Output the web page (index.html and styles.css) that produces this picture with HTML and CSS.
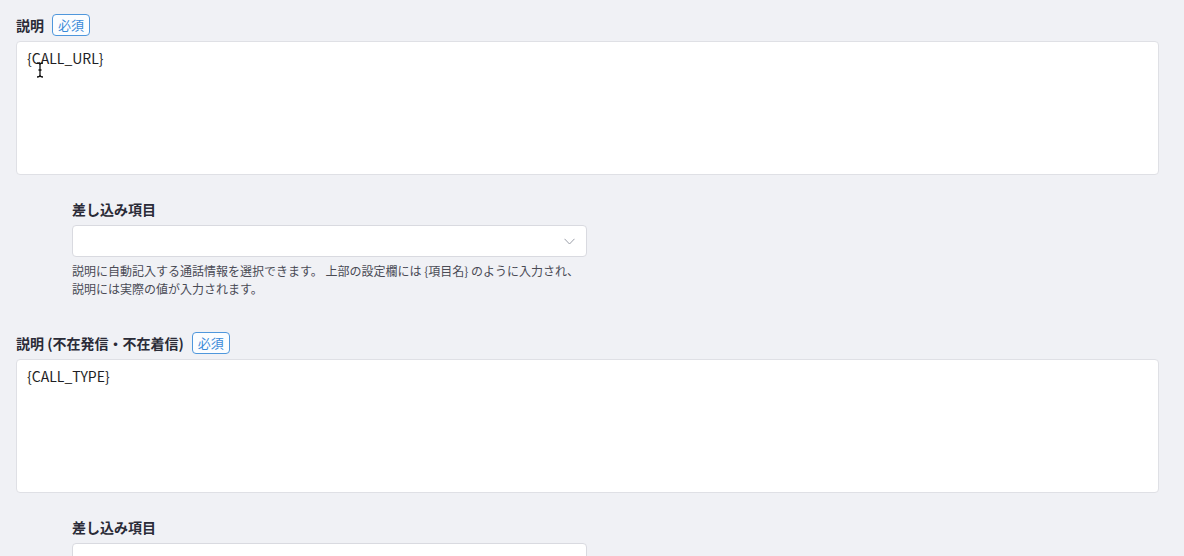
FILE: index.html
```html
<!DOCTYPE html>
<html lang="ja">
<head>
<meta charset="utf-8">
<title>説明</title>
<link rel="stylesheet" href="styles.css">
</head>
<body>
<div class="page">

  <!-- 説明 -->
  <div class="field">
    <div class="label-row">
      <span class="label">説明</span>
      <span class="badge">必須</span>
    </div>
    <div class="textarea-wrap">
      <div class="textarea">{CALL_URL}</div>
      <svg class="ibeam" width="8" height="16" viewBox="0 0 8 16">
        <path d="M1 1 Q4 1 4 3 L4 13 Q4 15 1 15 M7 1 Q4 1 4 3 M4 13 Q4 15 7 15 M2.5 8 L5.5 8" fill="none" stroke="#111" stroke-width="1.3"/>
      </svg>
    </div>
    <div class="sub">
      <div class="sub-label">差し込み項目</div>
      <div class="select">
        <svg class="chevron" width="11" height="7" viewBox="0 0 11 7"><path d="M0.5 0.8 L5.5 6 L10.5 0.8" fill="none" stroke="#9a9ea8" stroke-width="1"/></svg>
      </div>
      <p class="help">説明に自動記入する通話情報を選択できます。 上部の設定欄には {項目名} のように入力され、<br>説明には実際の値が入力されます。</p>
    </div>
  </div>

  <!-- 説明 (不在発信・不在着信) -->
  <div class="field">
    <div class="label-row">
      <span class="label">説明 (不在発信・不在着信)</span>
      <span class="badge">必須</span>
    </div>
    <div class="textarea-wrap">
      <div class="textarea">{CALL_TYPE}</div>
    </div>
    <div class="sub">
      <div class="sub-label">差し込み項目</div>
      <div class="select">
        <svg class="chevron" width="11" height="7" viewBox="0 0 11 7"><path d="M0.5 0.8 L5.5 6 L10.5 0.8" fill="none" stroke="#9a9ea8" stroke-width="1"/></svg>
      </div>
    </div>
  </div>

</div>
</body>
</html>
```

FILE: styles.css
```css
html, body { margin: 0; padding: 0; background: #f0f1f5; height: 100%; overflow: hidden; }

body { font-family: "Noto Sans CJK JP", "Noto Sans", sans-serif; color: #23232f; }

.page { padding: 14px 25px 0 16px; }

.field { margin-bottom: 34px; }

.label-row { display: flex; align-items: center; gap: 8px; height: 22px; margin-bottom: 5px; }
.label { font-size: 14px; font-weight: 700; line-height: 20px; color: #2a2b37; }
.badge { font-size: 13px; line-height: 20px; height: 20px; padding: 0 5px; color: #3a8ad8;
         border: 1px solid #4f97dc; border-radius: 4px; background: #fbfdff; }

.textarea-wrap { position: relative; }
.textarea { background: #fff; border: 1px solid #dfe0e5; border-radius: 4px;
            padding: 5px 10px; box-sizing: border-box; height: 134px;
            font-size: 14px; line-height: 22px; color: #1e1e24; }
.ibeam { position: absolute; left: 20px; top: 21px; }

.sub { margin-left: 56px; margin-top: 24px; width: 515px; }
.sub-label { font-size: 14px; font-weight: 700; line-height: 20px; color: #2a2b37; margin-bottom: 6px; }
.select { height: 32px; box-sizing: border-box; background: #fff; border: 1px solid #d9dae0;
          border-radius: 4px; display: flex; align-items: center; justify-content: flex-end; padding-right: 11px; }
.help { margin: 5px 0 0; font-size: 12px; line-height: 18px; color: #4a4b55; white-space: nowrap; }
```
